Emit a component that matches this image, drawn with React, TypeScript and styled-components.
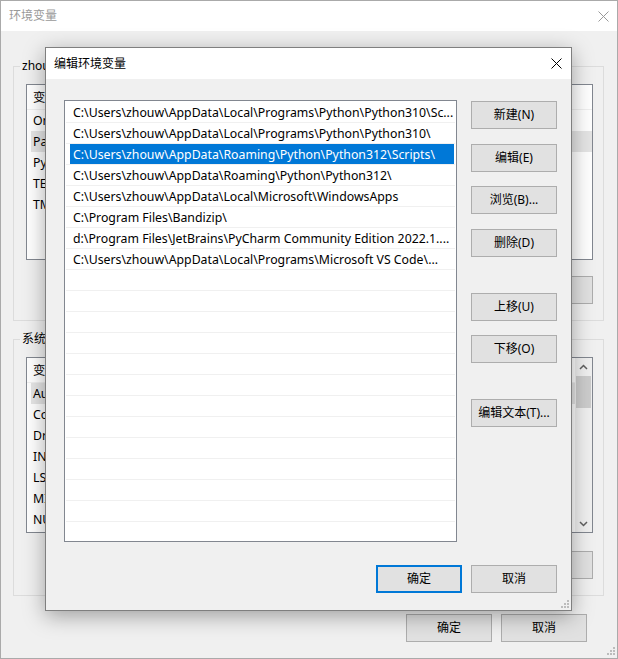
import React from 'react'
import styled, { createGlobalStyle } from 'styled-components'

const GlobalStyle = createGlobalStyle`
  html, body {
    margin: 0;
    padding: 0;
  }
  body {
    width: 618px;
    height: 659px;
    overflow: hidden;
    background: #f0f0f0;
    font-family: "Noto Sans", "Noto Sans CJK SC", sans-serif;
    font-size: 12px;
    color: #000;
  }
  #root {
    position: relative;
    width: 618px;
    height: 659px;
  }
`

const Window = styled.div`
  position: relative;
  width: 618px;
  height: 659px;
  box-sizing: border-box;
  border: 1px solid #aaaaaa;
  background: #f0f0f0;
  display: flex;
  flex-direction: column;
`

const TitleBar = styled.div<{ $active?: boolean; $height: number }>`
  flex: none;
  height: ${p => p.$height}px;
  background: #fff;
  display: flex;
  align-items: center;
  justify-content: space-between;
  padding: 0 ${p => (p.$active ? 9 : 8)}px 0 8px;
  color: ${p => (p.$active ? '#000' : '#999')};
  line-height: 16px;
`

const Body = styled.div`
  flex: 1;
  display: flex;
  flex-direction: column;
  padding: 0 13px 0 12px;
`

const Group = styled.fieldset<{ $top: number }>`
  margin: ${p => p.$top}px 0 0 0;
  padding: 10px 10px 16px 12px;
  border: 1px solid #dcdcdc;
  min-width: 0;
`

const Legend = styled.legend`
  margin-left: -6px;
  padding: 0 2px;
  line-height: 16px;
`

const BgList = styled.div`
  height: 176px;
  box-sizing: border-box;
  border: 1px solid #828790;
  background: #fff;
  display: flex;
  overflow: hidden;
`

const BgListMain = styled.div`
  flex: 1;
  min-width: 0;
  font-size: 12.3px;
`

const BgHeader = styled.div`
  display: flex;
  height: 24px;
  align-items: center;
  border-bottom: 1px solid #f0f0f0;
`

const BgHeaderCell = styled.div<{ $w: number }>`
  width: ${p => p.$w}px;
  box-sizing: border-box;
  padding-left: 6px;
  border-right: 1px solid #e5e5e5;
  height: 100%;
  display: flex;
  align-items: center;
`

const BgRow = styled.div<{ $selected?: boolean }>`
  display: flex;
  height: 21px;
  align-items: center;
  margin-left: 4px;
  padding-left: 2px;
  background: ${p => (p.$selected ? '#e5e5e5' : 'transparent')};
  white-space: nowrap;
`

const BgCell = styled.div<{ $w: number }>`
  width: ${p => p.$w}px;
  flex: none;
`

const Scrollbar = styled.div`
  flex: none;
  width: 17px;
  background: #f0f0f0;
  display: flex;
  flex-direction: column;
`

const ScrollArrow = styled.div`
  height: 17px;
  display: flex;
  align-items: center;
  justify-content: center;
`

const ScrollTrack = styled.div`
  flex: 1;
  display: flex;
  flex-direction: column;
  padding-top: 1px;
`

const Thumb = styled.div`
  height: 32px;
  margin: 0 1px 0 1px;
  background: #cdcdcd;
`

const ButtonRow = styled.div<{ $top: number; $right?: number }>`
  display: flex;
  justify-content: flex-end;
  gap: 9px;
  margin-top: ${p => p.$top}px;
  padding-right: ${p => p.$right ?? 0}px;
`

const Button = styled.button<{ $focused?: boolean }>`
  width: 86px;
  height: 28px;
  box-sizing: border-box;
  margin: 0;
  padding: 0;
  background: #e1e1e1;
  border: ${p => (p.$focused ? '2px solid #0078d7' : '1px solid #adadad')};
  border-radius: 0;
  font-family: inherit;
  font-size: 12px;
  color: #000;
  line-height: 16px;
  flex: none;
`

const Grip = styled.svg<{ $right: number; $bottom: number }>`
  position: absolute;
  right: ${p => p.$right}px;
  bottom: ${p => p.$bottom}px;
`

const Dialog = styled.div`
  position: absolute;
  left: 45px;
  top: 47px;
  width: 527px;
  height: 564px;
  box-sizing: border-box;
  border: 1px solid #7f7f7f;
  background: #f0f0f0;
  box-shadow: 0 5px 20px rgba(0, 0, 0, 0.34);
  display: flex;
  flex-direction: column;
`

const DialogBody = styled.div`
  flex: 1;
  display: flex;
  flex-direction: column;
  padding: 21px 14px 17px 18px;
`

const MainRow = styled.div`
  display: flex;
  gap: 14px;
`

const PathList = styled.div`
  width: 393px;
  height: 442px;
  box-sizing: border-box;
  border: 1px solid #828790;
  background: #fff;
  padding: 1px 1px 0 1px;
  overflow: hidden;
`

const PathRow = styled.div`
  height: 21px;
  box-sizing: border-box;
  border-bottom: 1px solid #f0f0f0;
  display: flex;
`

const PathText = styled.div<{ $selected?: boolean }>`
  flex: 1;
  min-width: 0;
  margin: 0 1px 0 4px;
  padding-left: 3px;
  height: 20px;
  line-height: 21px;
  font-size: 12.3px;
  white-space: nowrap;
  overflow: hidden;
  background: ${p => (p.$selected ? '#0078d7' : 'transparent')};
  color: ${p => (p.$selected ? '#fff' : '#000')};
`

const SideButtons = styled.div`
  display: flex;
  flex-direction: column;
  padding-top: 1px;
`

const SideButton = styled(Button)<{ $gap: number }>`
  margin-top: ${p => p.$gap}px;
`

const CloseIcon = ({ color }: { color: string }) => (
  <svg width="11" height="11" viewBox="0 0 11 11">
    <path d="M0.5 0.5L10.5 10.5M10.5 0.5L0.5 10.5" stroke={color} strokeWidth="1" fill="none" />
  </svg>
)

const GripIcon = ({ right, bottom }: { right: number; bottom: number }) => (
  <Grip $right={right} $bottom={bottom} width="9" height="9" viewBox="0 0 9 9">
    {[
      [7, 1],
      [4, 4],
      [7, 4],
      [1, 7],
      [4, 7],
      [7, 7],
    ].map(([x, y]) => (
      <rect key={`${x}-${y}`} x={x - 1} y={y - 1} width="2" height="2" fill="#bcbcbc" />
    ))}
  </Grip>
)

const Chevron = ({ up }: { up?: boolean }) => (
  <svg width="9" height="6" viewBox="0 0 9 6">
    <path
      d={up ? 'M1 5L4.5 1.5L8 5' : 'M1 1L4.5 4.5L8 1'}
      stroke="#606060"
      strokeWidth="1.5"
      fill="none"
    />
  </svg>
)

// values behind the dialog, kept short so they fit their column
const userVars = [
  ['OneDrive', 'C:\\Users\\zhouw\\OneDrive'],
  ['Path', 'C:\\Users\\zhouw\\AppData\\Local\\Programs\\Python\\...'],
  ['PyCharm', 'D:\\Program Files\\JetBrains\\bin;'],
  ['TEMP', 'C:\\Users\\zhouw\\AppData\\Local\\Temp'],
  ['TMP', 'C:\\Users\\zhouw\\AppData\\Local\\Temp'],
]

const systemVars = [
  ['AutoCAD', 'C:\\Program Files\\Autodesk'],
  ['ComSpec', 'C:\\WINDOWS\\system32\\cmd.exe'],
  ['DriverData', 'C:\\Windows\\System32\\Drivers\\DriverData'],
  ['INTEL_DEV', 'C:\\Program Files (x86)\\Common Files\\Intel'],
  ['LSHOME', 'C:\\Program Files\\LS'],
  ['MIC_PATH', '%INTEL_DEV%compiler\\lib\\mic'],
  ['NUMBER_OF_CPU', '16'],
]

const paths = [
  'C:\\Users\\zhouw\\AppData\\Local\\Programs\\Python\\Python310\\Sc...',
  'C:\\Users\\zhouw\\AppData\\Local\\Programs\\Python\\Python310\\',
  'C:\\Users\\zhouw\\AppData\\Roaming\\Python\\Python312\\Scripts\\',
  'C:\\Users\\zhouw\\AppData\\Roaming\\Python\\Python312\\',
  'C:\\Users\\zhouw\\AppData\\Local\\Microsoft\\WindowsApps',
  'C:\\Program Files\\Bandizip\\',
  'd:\\Program Files\\JetBrains\\PyCharm Community Edition 2022.1....',
  'C:\\Users\\zhouw\\AppData\\Local\\Programs\\Microsoft VS Code\\...',
]

const rows = [...paths, ...Array(13).fill('')]

function VarList({ items, selected, scroll }: { items: string[][]; selected: number; scroll?: boolean }) {
  return (
    <BgList>
      <BgListMain>
        <BgHeader>
          <BgHeaderCell $w={160}>变量</BgHeaderCell>
          <BgHeaderCell $w={380}>值</BgHeaderCell>
        </BgHeader>
        {items.map(([name, value], i) => (
          <BgRow key={name} $selected={i === selected}>
            <BgCell $w={154}>{name}</BgCell>
            <BgCell $w={360}>{value}</BgCell>
          </BgRow>
        ))}
      </BgListMain>
      {scroll && (
        <Scrollbar>
          <ScrollArrow>
            <Chevron up />
          </ScrollArrow>
          <ScrollTrack>
            <Thumb />
          </ScrollTrack>
          <ScrollArrow>
            <Chevron />
          </ScrollArrow>
        </Scrollbar>
      )}
    </BgList>
  )
}

export default function App() {
  return (
    <>
      <GlobalStyle />
      <Window>
        <TitleBar $height={30}>
          <span>环境变量</span>
          <CloseIcon color="#999" />
        </TitleBar>
        <Body>
          <Group $top={27}>
            <Legend>zhouw 的用户变量(U)</Legend>
            <VarList items={userVars} selected={1} />
            <ButtonRow $top={16}>
              <Button>新建(N)...</Button>
              <Button>编辑(E)...</Button>
              <Button>删除(D)</Button>
            </ButtonRow>
          </Group>
          <Group $top={10}>
            <Legend>系统变量(S)</Legend>
            <VarList items={systemVars} selected={0} scroll />
            <ButtonRow $top={18}>
              <Button>新建(W)...</Button>
              <Button>编辑(I)...</Button>
              <Button>删除(L)</Button>
            </ButtonRow>
          </Group>
          <ButtonRow $top={18} $right={17}>
            <Button>确定</Button>
            <Button>取消</Button>
          </ButtonRow>
        </Body>
        <GripIcon right={1} bottom={2} />
      </Window>

      <Dialog>
        <TitleBar $active $height={31}>
          <span>编辑环境变量</span>
          <CloseIcon color="#000" />
        </TitleBar>
        <DialogBody>
          <MainRow>
            <PathList>
              {rows.map((p, i) => (
                <PathRow key={i}>
                  <PathText $selected={i === 2}>{p}</PathText>
                </PathRow>
              ))}
            </PathList>
            <SideButtons>
              <SideButton $gap={0}>新建(N)</SideButton>
              <SideButton $gap={15}>编辑(E)</SideButton>
              <SideButton $gap={14}>浏览(B)...</SideButton>
              <SideButton $gap={15}>删除(D)</SideButton>
              <SideButton $gap={36}>上移(U)</SideButton>
              <SideButton $gap={14}>下移(O)</SideButton>
              <SideButton $gap={36}>编辑文本(T)...</SideButton>
            </SideButtons>
          </MainRow>
          <ButtonRow $top={23}>
            <Button $focused>确定</Button>
            <Button>取消</Button>
          </ButtonRow>
        </DialogBody>
        <GripIcon right={1} bottom={1} />
      </Dialog>
    </>
  )
}
